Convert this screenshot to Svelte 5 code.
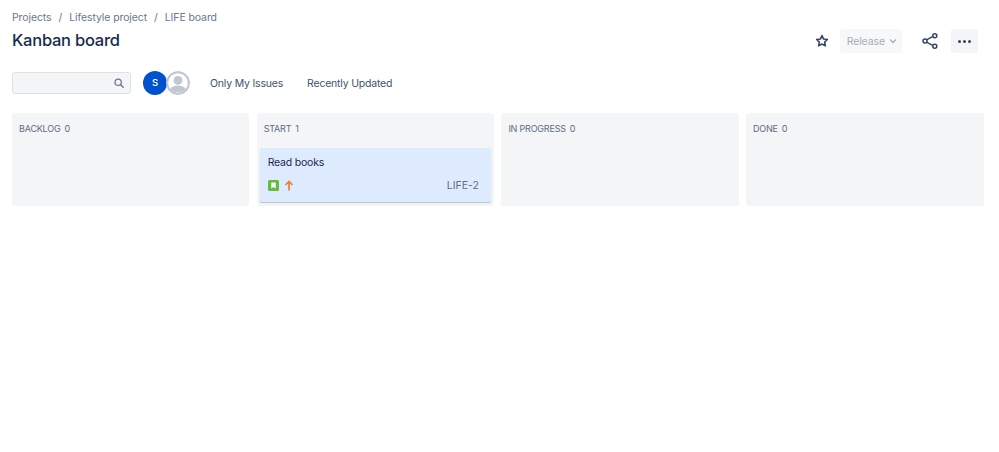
<script>
  const columns = [
    { name: 'BACKLOG', issues: [] },
    { name: 'START', issues: [{ title: 'Read books', key: 'LIFE-2' }] },
    { name: 'IN PROGRESS', issues: [] },
    { name: 'DONE', issues: [] }
  ];
</script>

<div class="page">
  <nav class="crumbs">
    <span>Projects</span><span>/</span>
    <span>Lifestyle project</span><span>/</span>
    <span>LIFE board</span>
  </nav>

  <header class="head">
    <h1>Kanban board</h1>
    <div class="actions">
      <svg class="star" width="14" height="14" viewBox="0 0 16 16">
        <path d="M8 1.800l1.850 3.980 4.300.55-3.160 2.970.82 4.300L8 11.500l-3.810 2.100.82-4.300-3.160-2.970 4.300-.55z" fill="none" stroke="#344563" stroke-width="1.800" stroke-linejoin="round" />
      </svg>
      <button class="release" disabled>
        Release
        <svg width="8" height="6" viewBox="0 0 8 6"><path d="M1 1.500l3 3 3-3" fill="none" stroke="#a5adba" stroke-width="1.300" /></svg>
      </button>
      <svg class="share" width="16" height="16" viewBox="0 0 16 16">
        <g fill="none" stroke="#344563" stroke-width="1.500">
          <path d="M4 7.200l7.500-4M4 8.800l7.500 4" />
          <circle cx="3" cy="8" r="2" fill="#fff" />
          <circle cx="12.800" cy="2.800" r="2" fill="#fff" />
          <circle cx="12.800" cy="13.200" r="2" fill="#fff" />
        </g>
      </svg>
      <button class="more" aria-label="More">
        <i></i><i></i><i></i>
      </button>
    </div>
  </header>

  <div class="filters">
    <div class="search">
      <svg width="10" height="10" viewBox="0 0 12 12">
        <circle cx="5" cy="5" r="3.800" fill="none" stroke="#6b778c" stroke-width="1.500" />
        <path d="M7.800 7.800l3.200 3.200" stroke="#6b778c" stroke-width="1.700" stroke-linecap="round" />
      </svg>
    </div>
    <div class="avatars">
      <span class="avatar me">S</span>
      <svg class="avatar anon" width="24" height="24" viewBox="0 0 24 24">
        <circle cx="12" cy="12" r="12" fill="#c1c7d0" />
        <circle cx="12" cy="12" r="9.800" fill="#fff" />
        <circle cx="12" cy="9.400" r="4.400" fill="#c1c7d0" />
        <path d="M4.200 18.400c1.200-3 4.200-4 7.800-4s6.600 1 7.800 4a12 12 0 0 1-15.600 0z" fill="#c1c7d0" />
      </svg>
    </div>
    <span class="quick first">Only My Issues</span>
    <span class="quick">Recently Updated</span>
  </div>

  <section class="board">
    {#each columns as col}
      <div class="column">
        <div class="col-title">{col.name}<span class="count">{col.issues.length}</span></div>
        {#each col.issues as issue}
          <article class="card">
            <div class="card-title">{issue.title}</div>
            <div class="card-foot">
              <svg width="11" height="11" viewBox="0 0 11 11">
                <rect width="11" height="11" rx="1.500" fill="#63ba3c" />
                <path d="M3.300 2.400h4.400v6.200L5.500 7 3.300 8.600z" fill="#fff" />
              </svg>
              <svg class="prio" width="10" height="11" viewBox="0 0 10 11">
                <path d="M5 10.500V1.500M1.500 5L5 1.500 8.500 5" fill="none" stroke="#e97f33" stroke-width="1.700" />
              </svg>
              <span class="key">{issue.key}</span>
            </div>
          </article>
        {/each}
      </div>
    {/each}
  </section>
</div>

<style>
  :global(body) {
    background: #fff;
    font-family: Inter, "Liberation Sans", sans-serif;
    color: #172b4d;
  }

  .page {
    padding: 10px 15px 0 12px;
  }

  .crumbs {
    display: flex;
    gap: 7px;
    font-size: 10.500px;
    letter-spacing: -0.1px;
    line-height: 15px;
    color: #6b778c;
  }

  .head {
    display: flex;
    align-items: center;
    justify-content: space-between;
    height: 30px;
  }

  h1 {
    margin: 0;
    font-size: 16.500px;
    font-weight: 500;
    letter-spacing: -0.25px;
    color: #172b4d;
  }

  .actions {
    display: flex;
    align-items: center;
    padding-top: 2px;
    padding-right: 6px;
  }

  .release {
    display: flex;
    align-items: center;
    gap: 4px;
    height: 24px;
    margin-left: 11px;
    padding: 0 5px 0 7px;
    border: 0;
    border-radius: 3px;
    background: #f7f8f9;
    color: #a5adba;
    font: inherit;
    font-size: 10.500px;
    letter-spacing: -0.1px;
  }

  .share {
    margin-left: 20px;
  }

  .more {
    display: flex;
    align-items: center;
    justify-content: center;
    gap: 2px;
    width: 27px;
    height: 24px;
    margin-left: 13px;
    border: 0;
    border-radius: 3px;
    background: #f4f5f7;
  }

  .more i {
    width: 3px;
    height: 3px;
    border-radius: 50%;
    background: #344563;
  }

  .filters {
    display: flex;
    align-items: center;
    margin-top: 16px;
    height: 24px;
  }

  .search {
    box-sizing: border-box;
    display: flex;
    align-items: center;
    justify-content: flex-end;
    width: 119px;
    height: 22px;
    padding-right: 6px;
    border: 1px solid #dfe1e6;
    border-radius: 3px;
    background: #f4f5f7;
  }

  .avatars {
    display: flex;
    margin-left: 12px;
  }

  .avatar {
    display: block;
    width: 24px;
    height: 24px;
    border-radius: 50%;
  }

  .anon {
    margin-left: -1px;
  }

  .me {
    background: #0052cc;
    color: #fff;
    font-size: 9.500px;
    font-weight: 500;
    line-height: 24px;
    text-align: center;
  }

  .quick {
    margin-left: 24px;
    font-size: 10.500px;
    letter-spacing: -0.2px;
    color: #42526e;
  }

  .first {
    margin-left: 20px;
  }

  .board {
    display: grid;
    grid-template-columns: repeat(3, 237.200px) 1fr;
    gap: 7.500px;
    margin-top: 18px;
    align-items: stretch;
  }

  .column {
    box-sizing: border-box;
    min-height: 93px;
    padding: 0 3px 3px;
    border-radius: 3px;
    background: #f4f5f7;
  }

  .col-title {
    padding: 10px 0 0 4px;
    height: 25px;
    box-sizing: border-box;
    font-size: 9px;
    letter-spacing: -0.2px;
    line-height: 12px;
    color: #5e6c84;
  }

  .count {
    margin-left: 4px;
  }

  .card {
    box-sizing: border-box;
    height: 54px;
    margin-top: 10px;
    padding: 8px 12px 0 8px;
    border-radius: 2px;
    background: #deebff;
    box-shadow: 0 1px 1px rgba(9, 30, 66, 0.25);
  }

  .card-title {
    font-size: 10.500px;
    letter-spacing: -0.2px;
    line-height: 14px;
    color: #172b4d;
  }

  .card-foot {
    display: flex;
    align-items: center;
    margin-top: 9px;
  }

  .prio {
    margin-left: 5px;
  }

  .key {
    margin-left: auto;
    font-size: 10.500px;
    color: #5e6c84;
  }
</style>
